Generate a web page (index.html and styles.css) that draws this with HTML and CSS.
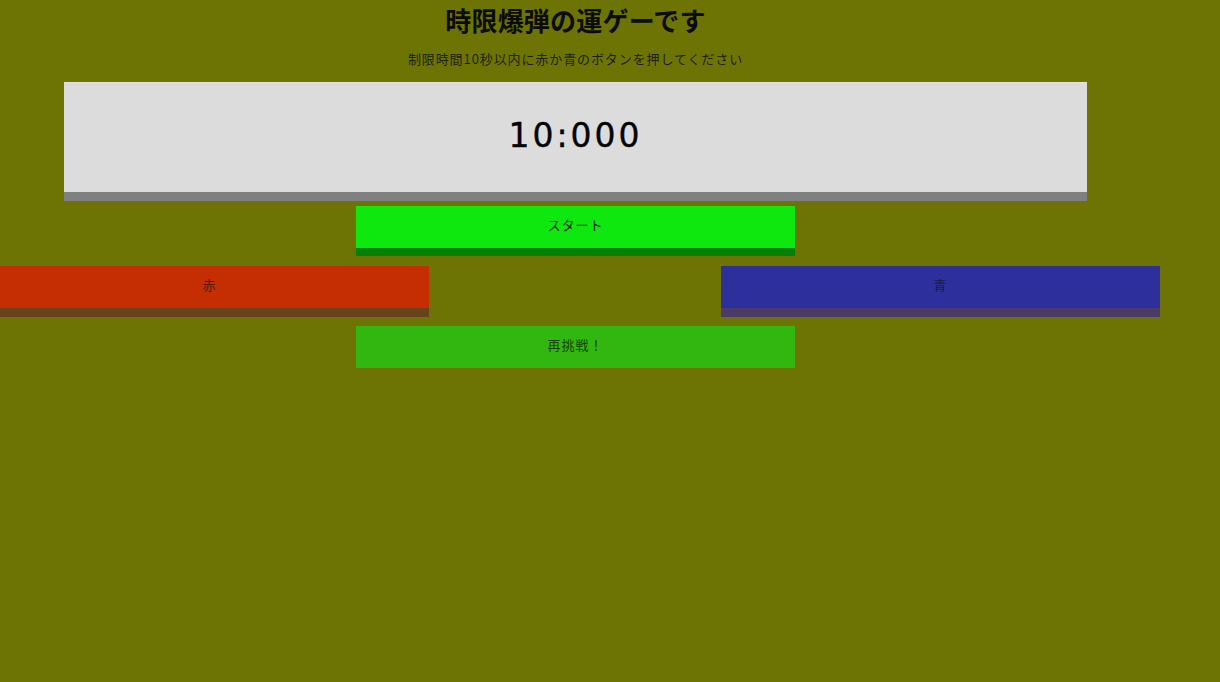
FILE: index.html
```html
<!DOCTYPE html>
<html lang="ja">
<head>
<meta charset="utf-8">
<title>時限爆弾の運ゲーです</title>
<link rel="stylesheet" href="styles.css">
</head>
<body>
<div class="page">
  <h1 class="title">時限爆弾の運ゲーです</h1>
  <p class="lead">制限時間10秒以内に赤か青のボタンを押してください</p>
  <div class="timer">10:000</div>
  <button class="btn btn-start">スタート</button>
  <div class="choices">
    <button class="btn btn-red">赤</button>
    <button class="btn btn-blue">青</button>
  </div>
  <button class="btn btn-retry">再挑戦！</button>
</div>
</body>
</html>
```

FILE: styles.css
```css
html, body {
  margin: 0;
  padding: 0;
  background: #6d7404;
  height: 100%;
  overflow: hidden;
}

.page {
  width: 1151px;
  display: flex;
  flex-direction: column;
  align-items: center;
  font-family: "Noto Sans CJK JP", "DejaVu Sans", sans-serif;
  color: #111;
}

.title {
  margin: 0;
  font-size: 26px;
  line-height: 40px;
  font-weight: bold;
  color: #0c0c0c;
  letter-spacing: 0.2px;
}

.lead {
  margin: 8px 0 12px;
  font-size: 13px;
  line-height: 22px;
  letter-spacing: 0.9px;
  color: #1e1e14;
}

.timer {
  box-sizing: border-box;
  width: 1023px;
  height: 119px;
  background: #dcdcdc;
  border-top: 1px solid #e6e6dc;
  border-bottom: 9px solid #808080;
  display: flex;
  align-items: center;
  justify-content: center;
  font-family: "DejaVu Sans", sans-serif;
  font-size: 33px;
  letter-spacing: 3px;
  color: #050505;
  padding-bottom: 4px;
  -webkit-text-stroke: 0.4px #050505;
}

.btn {
  box-sizing: border-box;
  width: 439px;
  border: none;
  margin: 0;
  font-family: "Noto Sans CJK JP", "DejaVu Sans", sans-serif;
  font-size: 13px;
  letter-spacing: 1px;
  color: #1a1a1a;
  cursor: pointer;
  padding: 0 0 5px;
}

.btn-start {
  height: 50px;
  margin-top: 5px;
  background: #0ee80e;
  border-bottom: 8px solid #058005;
  color: #222;
}

.choices {
  align-self: flex-start;
  width: 1170px;
  margin: 10px 0 0 -10px;
  display: flex;
  justify-content: space-between;
}

.btn-red {
  height: 51px;
  background: #c52d03;
  border-bottom: 9px solid #66431a;
  color: #4a1e0c;
}

.btn-blue {
  height: 51px;
  background: #2d2f9d;
  border-bottom: 9px solid #4a3a64;
  color: #1e1e38;
}

.btn-retry {
  margin-top: 9px;
  height: 42px;
  background: #32b610;
  color: #17420a;
}
```
